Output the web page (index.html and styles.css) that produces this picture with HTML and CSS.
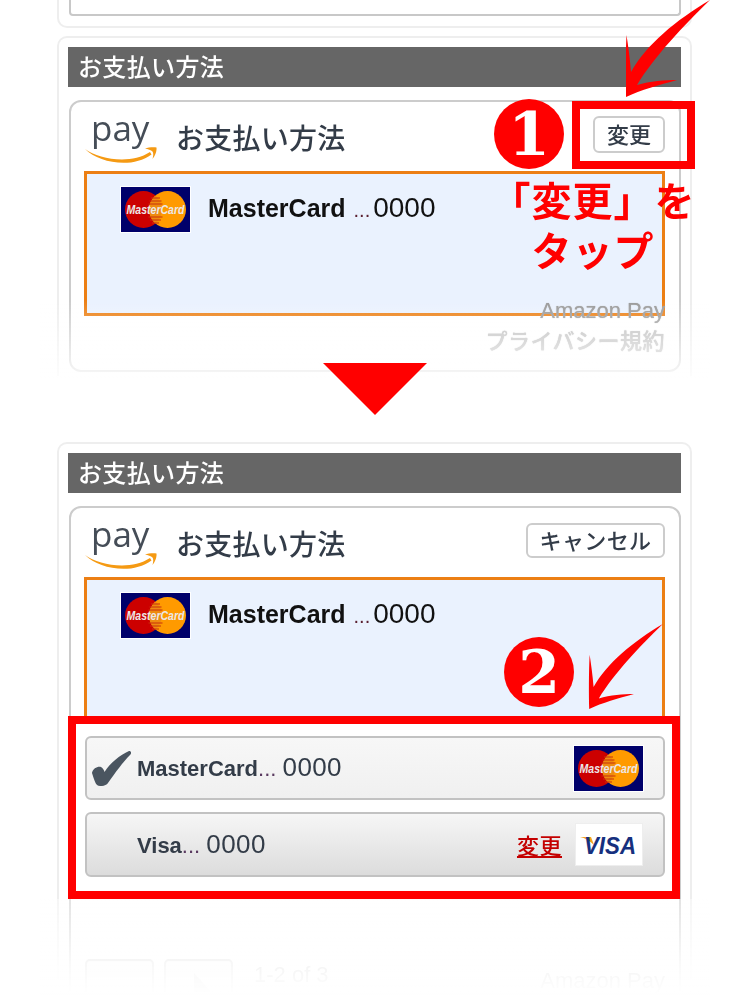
FILE: index.html
```html
<!DOCTYPE html>
<html lang="ja">
<head>
<meta charset="utf-8">
<title>お支払い方法</title>
<link rel="stylesheet" href="styles.css">
</head>
<body>
<svg class="defs" width="0" height="0" aria-hidden="true">
  <defs>
    <symbol id="mc" viewBox="0 0 69 45">
      <rect width="69" height="45" fill="#00006a"/>
      <circle cx="22.500" cy="22.500" r="18.500" fill="#cc0000"/>
      <circle cx="46.500" cy="22.500" r="18.500" fill="#ff9a00"/>
      <path d="M34.500 8.500a18.500 18.500 0 0 1 0 28a18.500 18.500 0 0 1 0-28z" fill="#ee8a10"/>
      <path d="M30 11h9M28.500 14h12M27.500 17h14M27.500 30h14M29 33h11M31 36h7" stroke="#c8300c" stroke-width="1.200"/>
      <text x="34.500" y="26.500" class="mc-text" text-anchor="middle" textLength="58" lengthAdjust="spacingAndGlyphs">MasterCard</text>
    </symbol>
    <symbol id="pay" viewBox="0 0 75 52">
      <text x="7" y="28.500" class="pay-text">pay</text>
      <path d="M1 37C15 47 46 53 66 40L67.500 42.500C48 57 15 51 1 37Z" fill="#f59a13"/>
      <path d="M61 36.500C64 35.500 69 35 72.500 35.500C73 39 71 44 68.500 47C69.500 43.500 69.500 41 68.500 39.500C67 38 64 37 61 36.500Z" fill="#f59a13"/>
    </symbol>
    <symbol id="swoosh" viewBox="0 0 84 97">
      <path d="M84 0C50 20 20 45 5 72C4 58 2 45 .5 35C-.5 55-.5 80 0 97C15 90 33 85 51 80C39 80 24 81 11 85C28 57 58 25 84 0Z" fill="#f00"/>
    </symbol>
  </defs>
</svg>

<main class="page">
  <section class="stub"><div class="stub-inner"></div></section>

  <section class="card card-first">
    <h2 class="bar">お支払い方法</h2>
    <div class="panel">
      <header class="panel-head">
        <svg class="pay-logo"><use href="#pay"/></svg>
        <h3 class="panel-title">お支払い方法</h3>
        <button class="btn btn-change" type="button">変更</button>
      </header>
      <div class="selected selected-short">
        <svg class="mc-logo"><use href="#mc"/></svg>
        <p class="selected-text"><b>MasterCard</b> <span class="dots">...</span><span class="num">0000</span></p>
      </div>
      <footer class="panel-foot">
        <p class="foot-line">Amazon Pay</p>
        <p class="foot-line foot-jp">プライバシー規約</p>
      </footer>
    </div>
  </section>

  <section class="card card-second">
    <h2 class="bar">お支払い方法</h2>
    <div class="panel">
      <header class="panel-head">
        <svg class="pay-logo"><use href="#pay"/></svg>
        <h3 class="panel-title">お支払い方法</h3>
        <button class="btn btn-cancel" type="button">キャンセル</button>
      </header>
      <div class="selected selected-open">
        <svg class="mc-logo"><use href="#mc"/></svg>
        <p class="selected-text"><b>MasterCard</b> <span class="dots">...</span><span class="num">0000</span></p>
      </div>
      <ul class="rows">
        <li class="row row-on">
          <svg class="check" viewBox="0 0 40 35"><path d="M1 22C2 17 7 15 10 16C12 17 13 19 13.500 21C19 12 29 4 38 0C40 0 41 2 39 4C32 11 24 22 17 32C15 35 9 36 6 34C4 32 3 28 1 22Z" fill="#4a5560"/></svg>
          <span class="row-name"><b>MasterCard</b><span class="row-dots">...</span> <span class="row-num">0000</span></span>
          <svg class="mc-logo"><use href="#mc"/></svg>
        </li>
        <li class="row row-off">
          <span class="row-name"><b>Visa</b><span class="row-dots">...</span> <span class="row-num">0000</span></span>
          <a class="row-link" href="#">変更</a>
          <svg class="visa-logo" viewBox="0 0 68 43">
            <rect x=".5" y=".5" width="67" height="42" fill="#fff" stroke="#eee"/>
            <path d="M5 14h11l3 8C15 18 10 15 5 14Z" fill="#f2a51f"/>
            <text x="9" y="31" class="visa-text" textLength="52" lengthAdjust="spacingAndGlyphs">VISA</text>
          </svg>
        </li>
      </ul>
      <div class="pager">
        <span class="pager-btn"></span>
        <span class="pager-btn pager-next"><svg class="pager-arrow" viewBox="0 0 20 20"><path d="M2 0L20 20H2Z" fill="#bbb"/></svg></span>
        <span class="pager-count">1-2 of 3</span>
        <span class="pager-brand">Amazon Pay</span>
      </div>
    </div>
  </section>

  <div class="fade fade-first"></div>
  <div class="fade fade-second"></div>

  <div class="tri"></div>

  <div class="mark mark-one"></div>
  <div class="mark mark-two"></div>
  <div class="badge badge-one">1</div>
  <div class="badge badge-two">2</div>
  <svg class="swoosh swoosh-one"><use href="#swoosh"/></svg>
  <svg class="swoosh swoosh-two"><use href="#swoosh"/></svg>
  <p class="note">「変更」を<br>タップ</p>
</main>
</body>
</html>
```
FILE: styles.css
```css
* { box-sizing: border-box; }
html, body { margin: 0; padding: 0; background: #fff; }
body { font-family: "Liberation Sans", "Noto Sans CJK JP", sans-serif; color: #333c48; }
h2, h3, p, ul { margin: 0; padding: 0; font-weight: normal; }
ul { list-style: none; }
.defs { position: absolute; }

.page { position: relative; width: 750px; height: 995px; overflow: hidden; }

.stub { width: 635px; height: 28px; margin-left: 57px; padding: 0 9px 0 10px; border: 2px solid #eee; border-top: 0; border-radius: 0 0 10px 10px; }
.stub-inner { height: 16px; border: 2px solid #c8c8c8; border-top: 0; border-radius: 0 0 4px 4px; }

.card { width: 635px; margin-left: 57px; padding: 9px 9px 0; border: 2px solid #eee; border-bottom: 0; border-radius: 10px 10px 0 0; filter: blur(.3px); }
.card-first { height: 340px; margin-top: 8px; }
.card-second { height: 560px; margin-top: 66px; }

.bar { height: 40px; padding-left: 10px; background: #666; color: #fff; font: 500 24px/37px "Noto Sans CJK JP", sans-serif; letter-spacing: .35px; }

.panel { height: 272px; margin: 13px 0 0 1px; padding: 0 14px 0 13px; border: 2px solid #ccc; border-radius: 12px; background: #fff; }
.card-second .panel { height: 510px; }

.panel-head { display: flex; align-items: center; height: 69px; }
.pay-logo { width: 75px; height: 52px; flex: none; margin-top: 2px; }
.pay-text { font: 35px "Open Sans", sans-serif; fill: #454d57; }
.panel-title { margin-left: 17px; font: 500 28px/1 "Noto Sans CJK JP", sans-serif; letter-spacing: .25px; color: #333c48; }

.btn { margin-left: auto; margin-top: -5px; padding: 0 0 3px; border: 2px solid #ccc; border-radius: 6px; background: #fff; color: #333c48; font: 500 22px/1 "Noto Sans CJK JP", sans-serif; }
.btn-change { width: 72px; height: 37px; }
.btn-cancel { width: 139px; height: 35px; letter-spacing: .4px; }

.selected { display: flex; align-items: flex-start; gap: 18px; padding: 13px 0 0 34px; background: #eaf2fe; border: 3px solid #ec7f14; }
.selected-short { height: 145px; }
.selected-open { height: 143px; border-bottom: 0; }
.mc-logo { width: 69px; height: 45px; flex: none; outline: 1px solid #fff; }
.mc-text { font: italic bold 12px "Liberation Sans", sans-serif; fill: #ece8e8; }

.selected-text { margin-top: 2px; font-size: 25px; line-height: 38px; color: #111; white-space: nowrap; }
.dots { margin-left: 1px; font-size: 20px; color: #5a2030; }
.num { margin-left: 3px; font-size: 28px; }

.panel-foot { margin-top: -20px; text-align: right; position: relative; }
.foot-line { font-size: 22px; line-height: 29px; color: #9a9a9a; text-shadow: 0 0 1px #aaa; }
.foot-jp { font: 500 22px/28px "Noto Sans CJK JP", sans-serif; letter-spacing: .5px; color: #bcbcbc; }

.rows { margin: 16px 0 0 1px; display: flex; flex-direction: column; gap: 12px; }
.row { display: flex; align-items: center; height: 65px; padding-right: 20px; border: 2px solid #c2c2c2; border-radius: 6px; }
.row-on { height: 64px; padding-left: 4px; background: linear-gradient(#f7f7f7, #f0f0f0); }
.row-off { padding-left: 50px; background: linear-gradient(#f6f6f6, #dcdcdc); }
.check { width: 40px; height: 35px; flex: none; margin: 0 6px 0 0; }
.row-name { margin-top: -2px; font-size: 22px; line-height: 1; color: #333c48; white-space: nowrap; }
.row-dots { color: #5a3a60; }
.row-num { font-size: 26px; letter-spacing: .4px; }
.row-on .mc-logo { margin-left: auto; }
.row-link { margin-left: auto; margin-right: 13px; color: #c40000; font: 500 22px/1.2 "Noto Sans CJK JP", sans-serif; letter-spacing: .5px; text-decoration: underline; }
.visa-logo { width: 68px; height: 43px; flex: none; }
.visa-text { font: italic bold 24px "Liberation Sans", sans-serif; fill: #16307e; }

.pager { position: relative; display: flex; align-items: flex-start; margin: 82px 0 0 1px; }
.pager-btn { width: 69px; height: 40px; border: 2px solid #bbb; border-radius: 5px; background: #f0f0f0; }
.pager-next { margin-left: 10px; position: relative; }
.pager-arrow { position: absolute; left: 26px; top: 12px; width: 20px; height: 20px; }
.pager-count { margin: 3px 0 0 21px; font-size: 22px; color: #999; }
.pager-brand { margin: 9px 0 0 auto; font-size: 22px; color: #999; }

.fade { position: absolute; left: 40px; width: 670px; }
.fade-first { top: 300px; height: 78px; background: linear-gradient(rgba(255,255,255,0), rgba(255,255,255,.85)); }
.fade-second { top: 899px; height: 96px; background: linear-gradient(rgba(255,255,255,.45), rgba(255,255,255,.9) 70%, #fff); }

.tri { position: absolute; left: 323px; top: 363px; width: 0; height: 0; border-style: solid; border-width: 52px 52.500px 0; border-color: #f00 transparent transparent; }

.mark { position: absolute; border: 8px solid #f00; }
.mark-one { left: 572px; top: 101px; width: 123px; height: 68px; }
.mark-two { left: 68px; top: 716px; width: 612px; height: 183px; }

.badge { position: absolute; width: 70px; height: 70px; border-radius: 50%; background: #f00; color: #fff; font: bold 60px/70px "DejaVu Serif", serif; text-align: center; }
.badge-one { left: 494px; top: 99px; }
.badge-two { left: 504px; top: 637px; }

.swoosh { position: absolute; overflow: visible; }
.swoosh-one { left: 626px; top: 0; width: 84px; height: 97px; }
.swoosh-two { left: 588px; top: 624px; width: 76px; height: 85px; }

.note { position: absolute; left: 481px; top: 174px; width: 224px; color: #f00; font: bold 40px/50px "Noto Sans CJK JP", sans-serif; letter-spacing: 1px; text-align: center; }
```
